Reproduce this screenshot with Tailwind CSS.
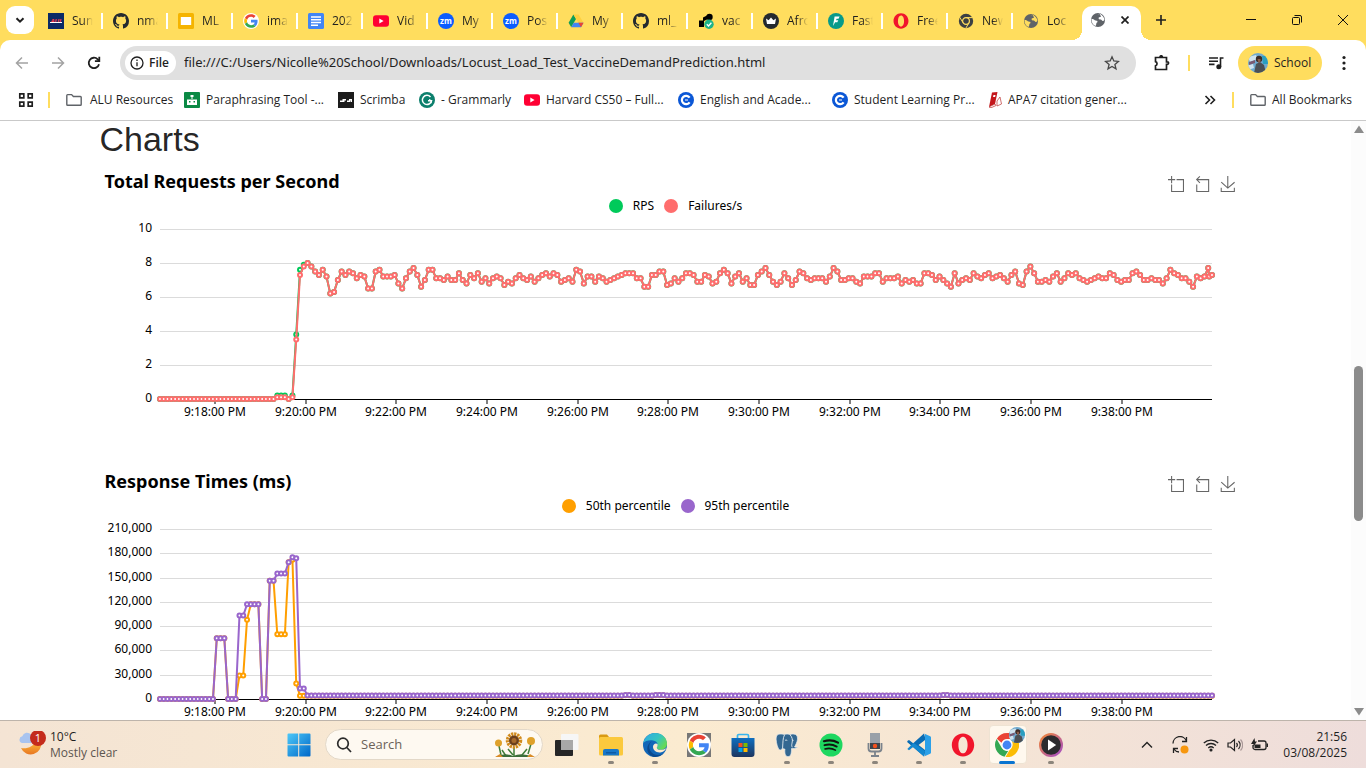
<!DOCTYPE html>
<html lang="en">
<head>
<meta charset="utf-8">
<title>Locust_Load_Test_VaccineDemandPrediction</title>
<script src="https://cdn.jsdelivr.net/npm/@tailwindcss/browser@4"></script>
</head>
<body class="flex h-screen flex-col overflow-hidden bg-white font-['Open_Sans','Noto_Sans',sans-serif] text-xs text-[#1f1f1f]">

<svg class="absolute size-0" aria-hidden="true">
  <symbol id="github" viewBox="0 0 16 16"><path fill="#24292f" d="M8 0C3.58 0 0 3.58 0 8c0 3.54 2.29 6.53 5.47 7.59.4.07.55-.17.55-.38 0-.19-.01-.82-.01-1.49-2.01.37-2.53-.49-2.69-.94-.09-.23-.48-.94-.82-1.13-.28-.15-.68-.52-.01-.53.63-.01 1.08.58 1.23.82.72 1.21 1.87.87 2.33.66.07-.52.28-.87.51-1.07-1.78-.2-3.64-.89-3.64-3.95 0-.87.31-1.59.82-2.15-.08-.2-.36-1.02.08-2.12 0 0 .67-.21 2.2.82.64-.18 1.32-.27 2-.27s1.36.09 2 .27c1.53-1.04 2.2-.82 2.2-.82.44 1.1.16 1.92.08 2.12.51.56.82 1.27.82 2.15 0 3.07-1.87 3.75-3.65 3.95.29.25.54.73.54 1.48 0 1.07-.01 1.93-.01 2.2 0 .21.15.46.55.38A8.01 8.01 0 0 0 16 8c0-4.42-3.58-8-8-8z"/></symbol>
  <symbol id="google" viewBox="0 0 48 48"><circle cx="24" cy="24" r="24" fill="#fff"/><g transform="translate(3.5 3.5) scale(.855)"><path fill="#EA4335" d="M24 9.5c3.54 0 6.71 1.22 9.21 3.6l6.85-6.85C35.9 2.38 30.47 0 24 0 14.62 0 6.51 5.38 2.56 13.22l7.98 6.19C12.43 13.72 17.74 9.5 24 9.5z"/><path fill="#4285F4" d="M46.98 24.55c0-1.57-.15-3.09-.38-4.55H24v9.02h12.94c-.58 2.96-2.26 5.48-4.78 7.18l7.73 6c4.51-4.18 7.09-10.36 7.09-17.65z"/><path fill="#FBBC05" d="M10.53 28.59c-.48-1.45-.76-2.99-.76-4.59s.27-3.14.76-4.59l-7.98-6.19C.92 16.46 0 20.12 0 24c0 3.88.92 7.54 2.56 10.78l7.97-6.19z"/><path fill="#34A853" d="M24 48c6.48 0 11.93-2.13 15.89-5.81l-7.73-6c-2.15 1.45-4.92 2.3-8.16 2.3-6.26 0-11.57-4.22-13.47-9.91l-7.98 6.19C6.51 42.62 14.62 48 24 48z"/></g></symbol>
  <symbol id="youtube" viewBox="0 0 16 16"><rect y="2.3" width="16" height="11.4" rx="3" fill="#f03"/><path d="M6.3 5.5v5L10.6 8z" fill="#fff"/></symbol>
  <symbol id="zoomapp" viewBox="0 0 16 16"><circle cx="8" cy="8" r="8" fill="#0b5cff"/><text x="8" y="10.600" font-family="Open Sans" font-size="8" font-weight="700" fill="#fff" text-anchor="middle">zm</text></symbol>
  <symbol id="globe" viewBox="0 0 16 16"><circle cx="8" cy="8" r="7" fill="#5f6368"/><path fill="#ffdd5e" d="M1.500 7c1.500-.4 2.500.4 3.300 1.200.9.7 2.400-.1 2.700 1.300.2 1.200-1.300 1-1.200 2.300 0 1-.4 1.700-.8 2.300C3 13 1.300 10.500 1.500 7zM7.500 2.300c.8-.6 1.800-.8 2.800-.4-.6.7-.6 1.300.3 1.700.9.500.3 1.400-.6 1.500-1 .2-1.700.7-1.300 1.600.5 1 1.800.5 2.600 1 .8.600 1 1.400 1.800 1.300.7-.1.900-.7 1.300-1C14.300 5.500 12.800 3.300 10.300 1.900z"/></symbol>
  <symbol id="globew" viewBox="0 0 16 16"><circle cx="8" cy="8" r="7" fill="#5f6368"/><path fill="#fff" d="M1.500 7c1.500-.4 2.500.4 3.300 1.200.9.7 2.400-.1 2.700 1.300.2 1.200-1.300 1-1.200 2.300 0 1-.4 1.700-.8 2.300C3 13 1.300 10.500 1.500 7zM7.500 2.300c.8-.6 1.800-.8 2.800-.4-.6.7-.6 1.300.3 1.700.9.500.3 1.400-.6 1.500-1 .2-1.700.7-1.300 1.600.5 1 1.800.5 2.600 1 .8.600 1 1.400 1.800 1.300.7-.1.900-.7 1.300-1C14.300 5.500 12.800 3.300 10.300 1.900z"/></symbol>
  <symbol id="folder" viewBox="0 0 16 16"><path fill="none" stroke="#5f6368" stroke-width="1.400" d="M.8 3.400c0-.5.3-.8.8-.8h4l1.800 1.900h7c.5 0 .8.300.8.800v7.200c0 .5-.3.800-.8.800H1.600c-.5 0-.8-.3-.8-.8z"/></symbol>
  <symbol id="cbadge" viewBox="0 0 16 16"><circle cx="8" cy="8" r="8" fill="#0b57d6"/><path d="M11.600 5.700A4.200 4.200 0 1 0 11.600 10.300" fill="none" stroke="#fff" stroke-width="2.200"/><path d="M7 8h3" stroke="#fff" stroke-width="1"/></symbol>
  <symbol id="opera" viewBox="0 0 24 24"><path fill="#f1152c" fill-rule="evenodd" d="M12 0.500c6.300 0 11.200 5.100 11.200 11.500S18.300 23.500 12 23.500.8 18.400.8 12 5.700.5 12 .5zm0 3.200c-2.900 0-4.600 3.700-4.600 8.300s1.700 8.300 4.600 8.300 4.600-3.700 4.600-8.300S14.900 3.700 12 3.700z"/></symbol>
  <symbol id="avatar" viewBox="0 0 20 20"><path fill="#6fa9cf" d="M0 0h20v20H0z"/><path fill="#cfe3ef" d="M0 4l8-2 2 4-8 3zM0 12l5-1 1 4-6 2z"/><path fill="#7a5a72" d="M1 9l6-2v3l-6 2z"/><path fill="#2a9fc0" d="M14 3h6v8h-5z"/><path fill="#4b5055" d="M6 20l2-9 4-2 4 3 2 8z"/><circle cx="11" cy="6" r="3.200" fill="#3c2b26"/><path fill="#8b5d49" d="M9.500 6h3v3l-2 1z"/></symbol>
  <symbol id="i-zoom" viewBox="0 0 60 60"><path d="M0,13.500h26.900 M13.500,26.900V0 M32.100,13.500H58V58H13.500 V32.100"/></symbol>
  <symbol id="i-back" viewBox="0 0 60 60"><path d="M22,1.400L9.900,13.500l12.300,12.300 M10.300,13.500H54.900v44.600 H10.300v-26"/></symbol>
  <symbol id="i-save" viewBox="0 0 60 60"><path d="M4.700,22.900L29.300,45.500L54.700,23.400M4.600,43.600L4.600,58L53.800,58L53.800,43.600M29.200,45.100L29.200,0"/></symbol>
</svg>

<!-- Tab strip -->
<header class="flex h-10 shrink-0 items-center bg-[#ffdd5e]">
  <button aria-label="Search tabs" class="mr-1 ml-[6px] flex size-7 shrink-0 items-center justify-center rounded-[9px] bg-white"><svg class="size-3" viewBox="0 0 12 12" fill="none" stroke="#1f1f1f" stroke-width="2"><path d="M2.500 4.200 6 7.700l3.500-3.500"/></svg></button>
  <nav id="tabs" class="flex h-full min-w-0 items-center" aria-label="Tabs">
    <button class="tab"><svg viewBox="0 0 16 16"><path fill="#0b2a66" d="M0 0h16v16H0z"/><text x="8" y="10" font-family="Open Sans" font-size="5.500" font-weight="800" font-style="italic" fill="#ef3b4a" text-anchor="middle">ALU</text><path fill="#fff" d="M2 9h12v1H2z"/></svg><span>Sun</span></button>
    <button class="tab"><svg><use href="#github"/></svg><span>nma</span></button>
    <button class="tab"><svg viewBox="0 0 16 16"><rect width="16" height="16" rx="1.500" fill="#f5b400"/><path fill="#fff" d="M2.800 4h10.400v8H2.800z"/></svg><span>ML</span></button>
    <button class="tab"><svg><use href="#google"/></svg><span>ima</span></button>
    <button class="tab"><svg viewBox="0 0 16 16"><rect width="16" height="16" rx="1.500" fill="#4285f4"/><path stroke="#fff" stroke-width="1.400" d="M3 4h10M3 6.800h10M3 9.500h10M3 12.200h7"/></svg><span>202</span></button>
    <button class="tab"><svg><use href="#youtube"/></svg><span>Vid</span></button>
    <button class="tab"><svg><use href="#zoomapp"/></svg><span>My</span></button>
    <button class="tab"><svg><use href="#zoomapp"/></svg><span>Pos</span></button>
    <button class="tab"><svg viewBox="0 0 16 16"><path fill="#0f9d58" d="M5.400 1.400 8 6 3.200 14.200.6 9.800z"/><path fill="#ffcf3f" d="M5.400 1.400h5.200l4.900 8.400h-5.100z"/><path fill="#4285f4" d="m5.700 9.800h9.800L13 14.200H3.200z"/><path fill="#ea4335" d="m10.400 9.800h5.100L13 14.200z"/></svg><span>My</span></button>
    <button class="tab"><svg><use href="#github"/></svg><span>ml_</span></button>
    <button class="tab"><svg viewBox="0 0 16 16"><circle cx="11.500" cy="4" r="3.200"/><path d="M5 4.500 10 2v4L6 8v6H1V7.500h4z"/><circle cx="11" cy="11.300" r="4.700" fill="#1db38a"/><path d="m8.800 11.300 1.700 1.700 2.900-3.200" fill="none" stroke="#fff" stroke-width="1.300"/></svg><span>vac</span></button>
    <button class="tab"><svg viewBox="0 0 16 16"><circle cx="8" cy="8" r="8" fill="#24292f"/><path fill="#fff" d="m3 5.500 2.600 1.700L8 4.500l2.400 2.700L13 5.500 12 11H4z"/></svg><span>Afro</span></button>
    <button class="tab"><svg viewBox="0 0 16 16"><circle cx="8" cy="8" r="8" fill="#079a8a"/><path fill="#fff" d="M6.600 3.500h5L10.500 5.800H8.600L8 7.300h2.300l-1 2H7.100L5 13z"/></svg><span>Fast</span></button>
    <button class="tab"><svg><use href="#opera"/></svg><span>Free</span></button>
    <button class="tab"><svg viewBox="0 0 16 16"><circle cx="8" cy="8" r="7.200" fill="#3c4043"/><circle cx="8" cy="8" r="3.400" fill="#3c4043" stroke="#ffdd5e" stroke-width="1.200"/><path stroke="#ffdd5e" d="M8 4.600h6.600M5 9.700 1.700 4.200M11 9.700 7.800 15.200"/></svg><span>New</span></button>
    <button class="tab"><svg><use href="#globe"/></svg><span>Loc</span></button>
  </nav>
  <div class="relative ml-1 flex h-[34px] w-[59px] shrink-0 items-center justify-between self-end rounded-t-[10px] bg-white px-2 pb-[6px]">
    <span class="absolute bottom-0 -left-[10px] size-[10px] bg-[radial-gradient(circle_at_0_0,transparent_10px,white_10px)]"></span>
    <span class="absolute -right-[10px] bottom-0 size-[10px] bg-[radial-gradient(circle_at_100%_0,transparent_10px,white_10px)]"></span>
    <svg class="size-4"><use href="#globew"/></svg>
    <button aria-label="Close tab" class="flex size-4 items-center justify-center"><svg class="size-2" viewBox="0 0 8 8" stroke="#1f1f1f" stroke-width="1.700"><path d="m.5.5 7 7M7.500.5l-7 7"/></svg></button>
  </div>
  <button aria-label="New tab" class="ml-3 flex size-4 shrink-0 items-center justify-center"><svg class="size-[10px]" viewBox="0 0 10 10" stroke="#1f1f1f" stroke-width="1.600"><path d="M5 0v10M0 5h10"/></svg></button>
  <div class="ml-auto flex h-full shrink-0">
    <button aria-label="Minimize" class="flex w-[46px] items-center justify-center"><svg class="size-[10px]" viewBox="0 0 10 10" stroke="#111"><path d="M0 4.500h10"/></svg></button>
    <button aria-label="Restore" class="flex w-[46px] items-center justify-center"><svg class="size-[10px]" viewBox="0 0 10 10" fill="none" stroke="#111"><rect x=".5" y="2.500" width="7" height="7" rx="1"/><path d="M2.500.5H8A1.500 1.500 0 0 1 9.500 2v5.500"/></svg></button>
    <button aria-label="Close" class="flex w-[46px] items-center justify-center"><svg class="size-[10px]" viewBox="0 0 10 10" stroke="#111"><path d="m0 0 10 10M10 0 0 10"/></svg></button>
  </div>
</header>

<!-- Toolbar -->
<div class="shrink-0 bg-[#ffdd5e]">
<div class="flex h-[46px] items-center rounded-t-[10px] bg-white pr-4 pl-[14px]">
  <button aria-label="Back" class="mr-5 size-4"><svg class="size-4" viewBox="0 0 16 16" fill="none" stroke="#a3a3a3" stroke-width="1.500"><path d="M14 8H3M8 2.500 2.500 8 8 13.500"/></svg></button>
  <button aria-label="Forward" class="mr-5 size-4"><svg class="size-4" viewBox="0 0 16 16" fill="none" stroke="#a3a3a3" stroke-width="1.500"><path d="M2 8h11M8 2.500 13.500 8 8 13.500"/></svg></button>
  <button aria-label="Reload" class="mr-[18px] size-4"><svg class="size-4" viewBox="0 0 16 16" fill="none" stroke="#1f1f1f" stroke-width="1.800"><path d="M13 9.200A5.200 5.200 0 1 1 11.700 4.300L13 5.600"/><path d="M13.300 1.800v4.400H8.900"/></svg></button>
  <div class="flex h-[34px] min-w-0 flex-1 items-center rounded-full bg-[#e0e0e0] pr-4 pl-[5px]">
    <button class="flex h-6 w-[51px] shrink-0 items-center gap-[5px] rounded-full bg-white pl-[5px] font-semibold"><svg class="size-[14px]" viewBox="0 0 14 14" fill="none" stroke="#1f1f1f" stroke-width="1.300"><circle cx="7" cy="7" r="6"/><path d="M7 6.200v4M7 3.600V5"/></svg>File</button>
    <input aria-label="Address" class="ml-2 min-w-0 flex-1 bg-transparent font-['Noto_Sans',sans-serif] text-[13px] outline-none" value="file:///C:/Users/Nicolle%20School/Downloads/Locust_Load_Test_VaccineDemandPrediction.html">
    <button aria-label="Bookmark this page" class="size-4"><svg class="size-4" viewBox="0 0 16 16" fill="none" stroke="#474747" stroke-width="1.300"><path d="m8 1.800 1.800 4.200 4.600.4-3.500 3 1.100 4.500L8 11.500l-4 2.400 1.100-4.500-3.500-3 4.600-.4z"/></svg></button>
  </div>
  <button aria-label="Extensions" class="ml-[18px] size-4"><svg class="size-4" viewBox="0 0 16 16" fill="none" stroke="#1f1f1f" stroke-width="1.700"><path d="M1.500 2.500h11v4.300h.8a1.300 1.300 0 0 1 0 2.600h-.8v5.100h-11v-3.700a2.200 2.200 0 0 0 0-4.200z"/><path d="M6 2a1.200 1.200 0 0 1 2.400 0" fill="#1f1f1f"/></svg></button>
  <span class="ml-[18px] h-4 w-[2px] bg-[#ffdd5e]"></span>
  <button aria-label="Media controls" class="ml-[18px] size-4"><svg class="size-4" viewBox="0 0 16 16" fill="none" stroke="#1f1f1f" stroke-width="1.600"><path d="M1 3h9M1 6.200h9M1 9.400h5.500M12.500 12V3h3"/><circle cx="10.800" cy="11.800" r="1.700" fill="#1f1f1f"/></svg></button>
  <button class="ml-[14px] flex h-[34px] w-[84px] shrink-0 items-center gap-[6px] rounded-full bg-[#ffdd5e] pl-[10px]"><svg class="size-5 rounded-full"><use href="#avatar"/></svg>School</button>
  <button aria-label="Menu" class="ml-[14px] size-4 w-[14px]"><svg class="h-4 w-[14px]" viewBox="0 0 14 16" fill="#1f1f1f"><circle cx="8" cy="2.500" r="1.600"/><circle cx="8" cy="8" r="1.600"/><circle cx="8" cy="13.500" r="1.600"/></svg></button>
</div>
</div>

<!-- Bookmarks bar -->
<div class="flex h-[35px] shrink-0 items-center border-b border-[#c9c9c9] bg-white pr-[14px] pb-[6px] pl-[18px] whitespace-nowrap">
  <button aria-label="Apps" class="size-4"><svg class="size-4" viewBox="0 0 16 16" fill="none" stroke="#1f1f1f" stroke-width="1.700"><path d="M1.800 1.800h4v4h-4zM10.200 1.800h4v4h-4zM1.800 10.200h4v4h-4zM10.200 10.200h4v4h-4z"/></svg></button>
  <span class="mr-4 ml-[14px] h-4 w-[2px] bg-[#ffdd5e]"></span>
  <a href="#" class="flex w-[118px] items-center gap-2"><svg class="size-4"><use href="#folder"/></svg>ALU Resources</a>
  <a href="#" class="flex w-[154px] items-center gap-[6px]"><svg class="size-4" viewBox="0 0 16 16"><rect width="16" height="16" rx="1" fill="#0b8a45"/><path fill="#fff" d="M3 7.500h10V13H3zM7.500 4h1v3h-1zM6.500 3h3v2h-3z"/><path fill="#0b8a45" d="M5 9h1.500v1.500H5zM9.500 9H11v1.500H9.500z"/></svg>Paraphrasing Tool -...</a>
  <a href="#" class="flex w-[81px] items-center gap-[6px]"><svg class="size-4" viewBox="0 0 16 16"><path fill="#1c1c1c" d="M0 0h16v16H0z"/><path fill="#fff" d="M2 8.500h2.500V7H8v1.500H6.500V10H2zM9 8.500h2V7h3v3h-1.500V8.500H12V10H9z"/></svg>Scrimba</a>
  <a href="#" class="flex w-[105px] items-center gap-[6px]"><svg class="size-4" viewBox="0 0 16 16"><circle cx="8" cy="8" r="8" fill="#0c7f6c"/><path d="M11.500 5A4.600 4.600 0 1 0 12.500 8.800H9" fill="none" stroke="#fff" stroke-width="1.500"/><path d="m10 7.400 2.600 1.300-.6 2.600" fill="none" stroke="#fff"/></svg>- Grammarly</a>
  <a href="#" class="flex w-[154px] items-center gap-[6px]"><svg class="size-4"><use href="#youtube"/></svg>Harvard CS50 – Full...</a>
  <a href="#" class="flex w-[154px] items-center gap-[6px]"><svg class="size-4"><use href="#cbadge"/></svg>English and Acade...</a>
  <a href="#" class="flex w-[156px] items-center gap-[6px]"><svg class="size-4"><use href="#cbadge"/></svg>Student Learning Pr...</a>
  <a href="#" class="flex items-center gap-1"><svg class="size-4" viewBox="0 0 16 16"><path fill="#c4161c" d="M4 .5 9.500 0 7 12 1 15z"/><path fill="#fff" stroke="#b33" stroke-width=".7" d="M1 15l6-3 1 1.500L3 15.800zM9 9l3-4 1.500 7L9 14z"/><path fill="#fff" d="M5.500 3h2l-.4 2H5z"/></svg>APA7 citation gener...</a>
  <button aria-label="More bookmarks" class="ml-auto size-3"><svg class="size-3" viewBox="0 0 12 12" fill="none" stroke="#1f1f1f" stroke-width="1.600"><path d="m1.500 2 4 4-4 4M6.500 2l4 4-4 4"/></svg></button>
  <span class="mr-4 ml-4 h-4 w-[2px] bg-[#ffdd5e]"></span>
  <button class="flex items-center gap-[6px]"><svg class="size-4"><use href="#folder"/></svg>All Bookmarks</button>
</div>

<!-- Report page -->
<div class="flex min-h-0 flex-1">
  <main class="min-w-0 flex-1 overflow-hidden bg-white">
    <div class="mx-auto max-w-[1200px] px-6">
      <h1 class="mb-[10px] font-['Liberation_Sans',sans-serif] text-[34px] leading-9 text-black/87">Charts</h1>

      <section class="h-[300px] font-['Noto_Sans',sans-serif] text-black">
        <div class="flex h-[30px] items-center justify-between pr-4 pl-[5px]">
          <h2 class="pb-[2px] text-lg leading-6 font-bold">Total Requests per Second</h2>
          <div class="tools flex gap-[10px] pt-1"></div>
        </div>
        <div class="flex h-[18px] items-center justify-center gap-[10px]">
          <button class="flex items-center gap-[10px] leading-4"><span class="size-[14px] rounded-full bg-[#00ca5a]"></span>RPS</button>
          <button class="flex items-center gap-[10px] leading-4"><span class="size-[14px] rounded-full bg-[#ff6d6d]"></span>Failures/s</button>
        </div>
        <svg id="rps" class="block h-[252px] w-full" role="img" aria-label="Total Requests per Second"></svg>
      </section>

      <section class="h-[300px] font-['Noto_Sans',sans-serif] text-black">
        <div class="flex h-[30px] items-center justify-between pr-4 pl-[5px]">
          <h2 class="pb-[2px] text-lg leading-6 font-bold">Response Times (ms)</h2>
          <div class="tools flex gap-[10px] pt-1"></div>
        </div>
        <div class="flex h-[18px] items-center justify-center gap-[10px]">
          <button class="flex items-center gap-[10px] leading-4"><span class="size-[14px] rounded-full bg-[#ff9f00]"></span>50th percentile</button>
          <button class="flex items-center gap-[10px] leading-4"><span class="size-[14px] rounded-full bg-[#9966cc]"></span>95th percentile</button>
        </div>
        <svg id="resp" class="block h-[252px] w-full" role="img" aria-label="Response Times (ms)"></svg>
      </section>
    </div>
  </main>
  <div class="flex w-[15px] shrink-0 flex-col items-center bg-[#fcfcfc] py-1" aria-hidden="true">
    <svg class="h-2 w-[10px] shrink-0" viewBox="0 0 10 8" fill="#8b8b8b"><path d="M5 .5 10 8H0z"/></svg>
    <div class="grow-[233]"></div>
    <div class="h-[155px] w-[9px] shrink-0 rounded-full bg-[#8b8b8b]"></div>
    <div class="grow-[187]"></div>
    <svg class="h-2 w-[10px] shrink-0" viewBox="0 0 10 8" fill="#8b8b8b"><path d="M5 7.500 10 0H0z"/></svg>
  </div>
</div>

<!-- Taskbar -->
<footer class="flex h-12 shrink-0 items-center border-t border-[#bdb4ab] bg-linear-to-r from-[#f4e4d4] via-[#fbebd0] to-[#eedddb]">
  <button class="flex w-[277px] shrink-0 items-center gap-1 pl-[18px] text-left">
    <svg class="h-7 w-7" viewBox="0 0 28 28"><defs><linearGradient id="moon" x2="0" y2="1"><stop stop-color="#ffc23c"/><stop offset="1" stop-color="#e87722"/></linearGradient></defs><path fill="url(#moon)" d="M23 11A10.500 10.500 0 0 1 3 17c6 1 13-1 15-8z"/><path fill="#a9c4ef" d="M4 12a3.500 3.500 0 0 1 .3-6.800A5 5 0 0 1 13 3.600c3 0 4 2 4 4S15.500 12 14 12z"/><circle cx="20" cy="8" r="8" fill="#c42b1c" transform="translate(0 -1)"/><text x="20" y="11" font-family="Open Sans" font-size="11" fill="#fff" text-anchor="middle">1</text></svg>
    <span class="leading-4">10°C<br><span class="text-[#5c5650]">Mostly clear</span></span>
  </button>
  <button aria-label="Start" class="task"><svg viewBox="0 0 24 24"><defs><linearGradient id="win" x2="1" y2="1"><stop stop-color="#4cc8f8"/><stop offset="1" stop-color="#0067c8"/></linearGradient></defs><path fill="url(#win)" d="M.5 1.500a1 1 0 0 1 1-1h9.700v10.700H.5zM12.200.5h10.300a1 1 0 0 1 1 1v9.700H12.200zM.5 12.200h10.700v11.300H1.500a1 1 0 0 1-1-1zM12.200 12.200h11.300v10.300a1 1 0 0 1-1 1H12.200z"/></svg></button>
  <label class="mr-[2px] ml-1 flex h-[31px] w-[218px] shrink-0 items-center rounded-full border border-[#e3d8c8] bg-[#fef9f1] pr-[6px] pl-[10px]">
    <svg class="size-4 shrink-0" viewBox="0 0 16 16" fill="none" stroke="#2b2b2b" stroke-width="1.700"><circle cx="7" cy="6.500" r="5.300"/><path d="m10.800 10.500 4.200 4.500"/></svg>
    <input aria-label="Search" placeholder="Search" class="ml-[9px] min-w-0 flex-1 bg-transparent text-[13px] outline-none placeholder:text-[#6b6259]">
    <svg class="h-[26px] w-[42px] shrink-0" viewBox="0 0 42 26"><path d="M5 14l2 9M37 12l-3 10M20 15v9M12 24l-4-6M28 23l5-6M14 17l5 6" stroke="#3f7d3a" stroke-width="1.500" fill="none"/><g fill="#dfa12a"><circle cx="4.500" cy="11" r="3.500"/><circle cx="37" cy="9" r="4"/></g><circle cx="20" cy="8.500" r="6.500" fill="none" stroke="#d18a1c" stroke-width="3.500" stroke-dasharray="2.200 .8"/><circle cx="20" cy="8.500" r="5" fill="#6b3f1c"/><circle cx="20" cy="8.500" r="2.500" fill="#a8692a"/><path fill="#3c6e3a" d="M2 25q8-5 17-1 9-4 20 1z"/><path fill="#d98c28" d="M1 25l5-3 3 3zM33 25l3-3 5 3z"/></svg>
  </label>
  <button aria-label="Task view" class="task"><svg viewBox="0 0 24 24"><rect x="0" y="7" width="18" height="16" rx="1" fill="#262626"/><rect x="6" y="1" width="17.500" height="16" rx="1" fill="#f6f6f6"/><path fill="#a8a8a8" d="M6 7h12v10H6z"/></svg></button>
  <button aria-label="File Explorer" class="task run"><svg viewBox="0 0 24 24"><path fill="#d99a13" d="M0 3a1.500 1.500 0 0 1 1.500-1.500H8L10 4v5H0z"/><rect y="4" width="24" height="18.500" rx="1.500" fill="#fbc93d"/><path fill="#1877c9" d="M4 22.500V18a2 2 0 0 1 2-2h12a2 2 0 0 1 2 2v4.500z"/><path fill="#0d5aa5" d="M7 19h10v1.500H7z"/></svg></button>
  <button aria-label="Edge" class="task run"><svg viewBox="0 0 24 24"><defs><linearGradient id="e1" x2="1" y2=".6"><stop stop-color="#2fa8e8"/><stop offset=".6" stop-color="#35c5c0"/><stop offset="1" stop-color="#66d955"/></linearGradient></defs><circle cx="12" cy="12" r="12" fill="#1267b8"/><path fill="url(#e1)" d="M.3 10C1.500 4 6.500 0 12 0c7 0 12 5 12 10.500 0 4-3 6.300-6.300 6.300-3 0-4.200-1.300-3.900-2.200.8-1.300 1-2 .9-3C14.500 9 12 7.500 9 7.300 5 7 1.500 8.500.3 10z"/><path fill="#0c4a8e" d="M9.200 8c-3 2-4 6-2 9.500 2.800 5 9 6 14.300 2.600C18.500 23 14 24.500 10 23.700 3 21 2 12 9.200 8z"/><path fill="#fbebd0" d="M13.800 14.600c.9-1.200 1.100-2.500.7-3.600-1.700-1.500-4.500 0-4.500 2.800 0 3.400 3.200 6 7.200 5.600 3-.5 5.300-2.200 6.300-4.500-2.500 2-9.700 3.300-9.700-.3z"/></svg></button>
  <button aria-label="Google" class="task"><svg viewBox="0 0 24 24"><path fill="#777" d="M0 0h24v24H0z"/><use href="#google" width="24" height="24"/></svg></button>
  <button aria-label="Microsoft Store" class="task"><svg viewBox="0 0 24 24"><defs><linearGradient id="st" x2="0" y2="1"><stop stop-color="#0f6fc0"/><stop offset="1" stop-color="#1d355f"/></linearGradient></defs><path d="M6.500 6V2.700c0-.8.500-1.200 1.200-1.200h8.600c.7 0 1.200.4 1.200 1.200V6" fill="none" stroke="#37b5ee" stroke-width="1.700"/><path fill="url(#st)" d="M.5 5h23v16a3 3 0 0 1-3 3h-17a3 3 0 0 1-3-3z"/><path fill="#f25022" d="M7.500 10h4v4h-4z"/><path fill="#7fba00" d="M12.500 10h4v4h-4z"/><path fill="#00a4ef" d="M7.500 15h4v4h-4z"/><path fill="#ffb900" d="M12.500 15h4v4h-4z"/></svg></button>
  <button aria-label="pgAdmin" class="task run"><svg viewBox="0 0 24 24"><path fill="#336791" stroke="#e8eef2" stroke-width=".7" d="M5 1C1.500 1 .8 4 1.300 8c.5 4 2 9 4 9 1 0 1.500-1 2.300-2 .6 1 1.400 1 2.300 1-.2 3-.2 7 2.600 7.500 3.500.4 4-3 4-8 1.500.2 4.500.3 6-1.500-1.500.2-2.500.2-3 0C22.500 9 24 3.500 20.500 1.500 18.500.5 16.500 1 15 1.500 13 .8 11 .8 9.500 1.500 8 1 6.500.8 5 1z"/><path d="M9.500 2C7.800 5 8 9 7.600 15M15 1.800c2 2 3 5 2 8.500-.4 1.500-.4 2.500.2 4M10 7.500c1-.8 2-.5 2.200.3M17 7l1.500.4" fill="none" stroke="#e8eef2" stroke-width=".9"/></svg></button>
  <button aria-label="Spotify" class="task run"><svg viewBox="0 0 24 24"><circle cx="12" cy="12" r="11.500" fill="#1ed760"/><g fill="none" stroke="#10140f" stroke-linecap="round"><path stroke-width="2.200" d="M5 8.200c4.800-1.500 9.800-1 14 1.400"/><path stroke-width="1.900" d="M5.500 12.200c4.300-1.300 8.500-.8 12.200 1.400"/><path stroke-width="1.600" d="M6 15.900c3.700-1 7.200-.7 10.400 1.200"/></g></svg></button>
  <button aria-label="Voice recorder" class="task run"><svg viewBox="0 0 24 24"><path d="M5.500 10v5.500a3 3 0 0 0 3 3h7a3 3 0 0 0 3-3V10M12 18.500V23M8 23h8" fill="none" stroke="#7b838c" stroke-width="1.800"/><rect x="7" y="0" width="10" height="16" fill="#9aa1a9"/><path fill="#3e444b" d="M7 10h10v6H7z"/><circle cx="12" cy="13" r="2.200" fill="#f4511e"/></svg></button>
  <button aria-label="VS Code" class="task run"><svg viewBox="0 0 24 24"><path fill="#0a6cb4" d="M17 .5 6.200 10.300 2 7 .3 8v1.200L17 23.500l1.500-5.500V6z"/><path fill="#1488d0" d="M.3 16 2 17.200l4.200-3.300L17 23.500 18 18 8.700 11.300 6.200 10z"/><path fill="#2ba0e8" d="m17 .5 6.200 2.800c.5.2.8.7.8 1.200v15c0 .5-.3 1-.8 1.200L17 23.500c.6-.3 1-.8 1-1.500V2c0-.7-.4-1.200-1-1.500z"/><path fill="#fbebd0" d="m18 7-6.400 5 6.400 5zM0 9.500 3 12 0 14.500z"/></svg></button>
  <button aria-label="Opera" class="task run"><svg><use href="#opera"/></svg></button>
  <button aria-label="Chrome" class="task run active"><svg viewBox="0 0 24 24"><path fill="#ea4335" d="M12 0c4.500 0 8.300 2.400 10.400 6H12a6 6 0 0 0-5.500 3.800L1.800 5.700A12 12 0 0 1 12 0z"/><path fill="#34a853" d="M1.600 6 6.800 15a6 6 0 0 0 6.500 2.800L9.500 23.700A12 12 0 0 1 1.600 6z"/><path fill="#fbbc05" d="M22.400 6A12 12 0 0 1 10.500 24l5.500-9.500A6 6 0 0 0 15.500 6z"/><circle cx="12" cy="12" r="5.500" fill="#fff"/><circle cx="12" cy="12" r="4.400" fill="#4285f4"/></svg></button>
  <button aria-label="Media Player" class="task run"><svg viewBox="0 0 24 24"><defs><linearGradient id="mp" x2="1" y2="1"><stop stop-color="#f58a2e"/><stop offset="1" stop-color="#a04ad0"/></linearGradient></defs><circle cx="12" cy="12" r="12" fill="url(#mp)"/><circle cx="12" cy="12" r="9.800" fill="#2b2b2e"/><path fill="#fff" d="M9 6.500v11l8.200-5.500z"/></svg></button>
  <div class="ml-auto flex shrink-0 items-center pr-[19px]">
    <button aria-label="Hidden icons" class="mr-[18px]"><svg class="size-3" viewBox="0 0 12 12" fill="none" stroke="#222" stroke-width="1.400"><path d="m1 8.500 5-5 5 5"/></svg></button>
    <button aria-label="Sync" class="mr-[14px]"><svg class="size-[18px]" viewBox="0 0 18 18" fill="none" stroke="#222" stroke-width="1.300"><path d="M2 7.500A7 7 0 0 1 15.500 5M15.500 1v4.500H11M2.500 17v-4.500H7M2.800 13A7 7 0 0 0 8 16"/><circle cx="13.500" cy="13.500" r="4" fill="#f7970f" stroke="none"/></svg></button>
    <button aria-label="Network, sound and battery" class="mr-[14px] flex items-center gap-2">
      <svg class="size-4" viewBox="0 0 16 16" fill="none" stroke="#222" stroke-width="1.300"><path d="M.8 6a10.500 10.500 0 0 1 14.400 0M3 8.500a7.300 7.300 0 0 1 10 0M5.300 11a4 4 0 0 1 5.400 0"/><circle cx="8" cy="13" r=".9" fill="#222"/></svg>
      <svg class="size-4" viewBox="0 0 16 16" fill="none" stroke="#222" stroke-width="1.200"><path d="M1 6v4h2.500L7.500 13.500v-11L3.500 6zM9.500 6a3 3 0 0 1 0 4M11.500 4a6 6 0 0 1 0 8"/><path stroke="#a99" d="M13.500 2.500a8 8 0 0 1 0 11"/></svg>
      <svg class="h-4 w-[18px]" viewBox="0 0 18 16" fill="none" stroke="#222" stroke-width="1.300"><path d="M7 4h6a2 2 0 0 1 2 2v4.500a2 2 0 0 1-2 2H4a2 2 0 0 1-2-2V8"/><path fill="#222" stroke="none" d="M3.500 7.500h6V11h-6zM15.500 6.500H17v3.500h-1.500zM3.500 1 0 7h2.500L2 10l4-5.500H4z"/></svg>
    </button>
    <button class="text-right leading-4">21:56<br>03/08/2025</button>
  </div>
</footer>

<script>
  document.querySelectorAll('.tab').forEach((t, i, all) => {
    t.className += ' relative flex h-full w-[65px] min-w-0 shrink items-center gap-2 pl-[10px] pt-px text-left';
    t.querySelector('svg').setAttribute('class', 'size-4 shrink-0');
    t.querySelector('span').className = 'w-[21px] overflow-hidden whitespace-nowrap [mask-image:linear-gradient(to_right,black_50%,transparent)]';
    if (i < all.length - 1) t.insertAdjacentHTML('beforeend', '<i class="ml-auto h-4 w-[2px] shrink-0 bg-white"></i>');
  });
  document.querySelectorAll('.task').forEach(t => {
    const active = t.classList.contains('active');
    t.className += ' relative flex h-full w-11 shrink-0 items-center justify-center';
    t.querySelector('svg').setAttribute('class', 'relative size-6');
    if (active) {
      t.insertAdjacentHTML('afterbegin', '<i class="absolute top-1 left-1 h-[39px] w-[38px] rounded border border-[#eee3d3] bg-[#fff8ee]"></i>');
      t.insertAdjacentHTML('beforeend', '<svg class="absolute top-[6px] left-6 size-4 rounded-full"><use href="#avatar"/></svg><i class="absolute bottom-1 h-[3px] w-4 rounded-full bg-[#0a74d0]"></i>');
    } else if (t.classList.contains('run')) {
      t.insertAdjacentHTML('beforeend', '<i class="absolute bottom-1 h-[3px] w-[6px] rounded-full bg-[#8c857c]"></i>');
    }
  });
  document.querySelectorAll('.tools').forEach(d => {
    d.innerHTML = [['i-zoom', 'Zoom'], ['i-back', 'Restore zoom'], ['i-save', 'Save as image']].map(([id, label]) =>
      `<button aria-label="${label}"><svg class="block size-4 overflow-visible fill-none stroke-[#666] stroke-[4]"><use href="#${id}"/></svg></button>`).join('');
  });

  const zeros = n => Array(n).fill(0);
  const tail = '80 78 75 73 76 72 62 63 70 75 73 75 74 71 73 72 65 65 75 76 72 72 72 73 68 65 71 75 77 73 66 70 76 76 71 71 70 72 70 70 74 70 68 73 71 74 69 71 68 71 72 71 67 69 68 71 73 71 70 72 69 71 73 74 72 74 73 69 70 71 69 76 75 68 72 72 69 72 71 69 70 71 72 73 74 74 74 71 71 66 66 73 73 75 75 67 68 71 69 71 74 74 73 69 69 73 72 68 69 74 76 74 68 72 74 69 71 67 67 73 75 77 73 69 67 69 74 71 67 70 75 74 71 70 71 71 71 69 72 77 75 70 70 71 71 69 68 72 72 72 74 74 69 71 71 71 72 68 70 69 70 68 68 74 74 73 70 72 70 68 66 74 68 70 71 70 74 72 71 73 74 71 72 73 71 69 73 75 68 67 75 78 74 69 69 70 69 72 74 69 71 74 73 74 71 70 69 70 71 72 71 71 74 73 70 69 70 70 74 75 73 70 70 71 70 70 68 71 76 74 73 71 71 69 66 72 71 72 77 73'.split(' ').map(v => v / 10);
  const fails = [...zeros(31), .1, .1, .1, 0, .1, 3.5, 7.3, 7.8, ...tail];
  const rps = [...zeros(31), .2, .2, .2, 0, .2, 3.8, 7.6, 7.9, ...tail];
  const flat = v => Array.from({length: 240}, (_, i) => v + ([84, 85, 92, 93, 94, 168, 169].includes(i) ? 700 : 0));
  const p50 = [...zeros(15), 75e3, 75e3, 75e3, 0, 0, 0, 29e3, 29e3, 98e3, 117e3, 117e3, 117e3, 0, 0, 146e3, 146e3, 80e3, 80e3, 80e3, 169e3, 172e3, 19e3, 4000, 4000, ...flat(4000)];
  const p95 = [...zeros(15), 75e3, 75e3, 75e3, 0, 0, 0, 103e3, 103e3, 117e3, 117e3, 117e3, 117e3, 0, 0, 146e3, 146e3, 155e3, 155e3, 155e3, 169e3, 175e3, 174e3, 13e3, 13e3, ...flat(4200)];

  function draw(id, max, step, series) {
    const svg = document.getElementById(id), w = svg.clientWidth;
    const x0 = 60, x1 = w - 40, y = v => 184 - v / max * 170;
    let out = '';
    for (let v = 0; v <= max; v += step) {
      const ly = Math.round(y(v));
      if (v) out += `<path d="M${x0} ${ly + .5}H${x1}" stroke="#dbdbdb"/>`;
      out += `<text x="${x0 - 8}" y="${ly + 3}" text-anchor="end">${v.toLocaleString('en-US')}</text>`;
    }
    out += `<path d="M${x0} 184.5H${x1}" stroke="#000"/>`;
    for (let k = 0; k < 11; k++) {
      const tx = Math.floor(x0 + (x1 - x0) * (.0529 + .08617 * k));
      out += `<path d="M${tx} 184v5" stroke="#000"/><text x="${tx}" y="201" text-anchor="middle">9:${18 + 2 * k}:00 PM</text>`;
    }
    for (const [data, color] of series) {
      const pts = data.map((v, i) => [x0 + (x1 - x0) * Math.min(i / 278, 1), y(v)]);
      if (id === 'rps') pts.splice(278, 0, [pts[277][0] + 1, y(7.2)]);
      out += `<path d="M${pts.map(p => p.map(n => n.toFixed(2)).join(' ')).join('L')}" fill="none" stroke="${color}" stroke-width="2" stroke-linejoin="bevel"/>`;
      out += pts.map(p => `<circle cx="${p[0].toFixed(2)}" cy="${p[1].toFixed(2)}" r="2" fill="#fff" stroke="${color}" stroke-width="2"/>`).join('');
    }
    svg.innerHTML = `<g font-size="12" fill="#000">${out}</g>`;
  }
  function render() {
    draw('rps', 10, 2, [[rps, '#00ca5a'], [fails, '#ff6d6d']]);
    draw('resp', 210000, 30000, [[p50, '#ff9f00'], [p95, '#9966cc']]);
  }
  render();
  addEventListener('resize', render);
</script>
</body>
</html>
